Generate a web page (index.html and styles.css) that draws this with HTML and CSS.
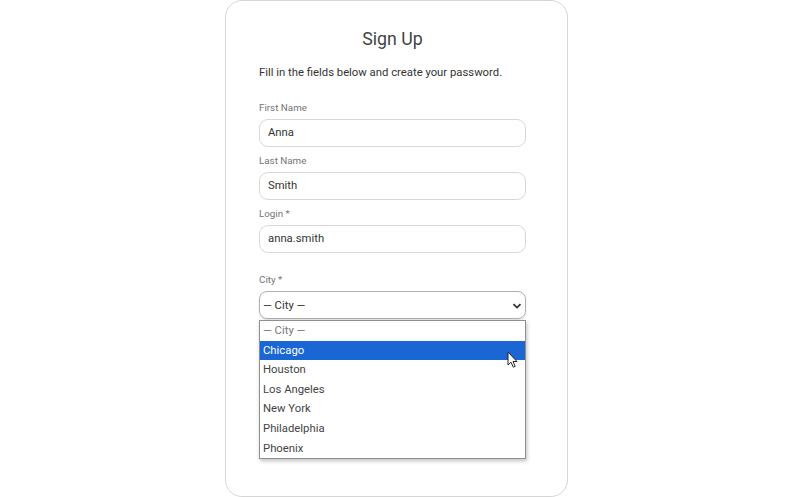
FILE: index.html
```html
<!DOCTYPE html>
<html>
<head>
<meta charset="utf-8">
<link rel="stylesheet" href="styles.css">
</head>
<body>
<div class="page">
  <div class="card">
    <h1 class="title">Sign Up</h1>
    <p class="lead">Fill in the fields below and create your password.</p>
    <div class="field">
      <label class="label">First Name</label>
      <div class="input">Anna</div>
    </div>
    <div class="field">
      <label class="label">Last Name</label>
      <div class="input">Smith</div>
    </div>
    <div class="field">
      <label class="label">Login *</label>
      <div class="input">anna.smith</div>
    </div>
    <div class="field city">
      <label class="label">City *</label>
      <div class="select-wrap">
        <div class="select">
          <span>— City —</span>
          <svg class="chev" width="10" height="6" viewBox="0 0 10 6"><path d="M1.5 1.2 L5 4.6 L8.5 1.2" fill="none" stroke="#333" stroke-width="1.8"/></svg>
        </div>
        <ul class="dropdown">
          <li class="opt placeholder">— City —</li>
          <li class="opt active">Chicago</li>
          <li class="opt">Houston</li>
          <li class="opt">Los Angeles</li>
          <li class="opt">New York</li>
          <li class="opt">Philadelphia</li>
          <li class="opt">Phoenix</li>
        </ul>
        <svg class="cursor" width="12" height="18" viewBox="0 0 12 18"><path d="M1 1 L1 14 L4 11.2 L6.3 16.2 L8.2 15.3 L6 10.5 L10 10.5 Z" fill="#fff" stroke="#222" stroke-width="1" stroke-linejoin="round"/></svg>
      </div>
    </div>
  </div>
</div>
</body>
</html>
```

FILE: styles.css
```css
* { box-sizing: border-box; }
html, body { margin: 0; padding: 0; background: #fff; }
body { font-family: Roboto, "Liberation Sans", sans-serif; color: #333; }
.page { display: flex; justify-content: center; padding-left: 1px; }
.card {
  width: 343px;
  height: 497px;
  border: 1px solid #d6d6d6;
  border-radius: 17px;
  padding: 25px 41px 0 33px;
}
.title {
  margin: 0;
  font-size: 17.8px;
  font-weight: 400;
  color: #444;
  text-align: center;
  line-height: 26px;
}
.lead {
  margin: 13px 0 0;
  font-size: 11.3px;
  line-height: 16px;
  color: #333;
}
.field { display: flex; flex-direction: column; }
.lead + .field { margin-top: 20px; }
.label {
  font-size: 9.8px;
  line-height: 14px;
  color: #757575;
  margin-bottom: 4px;
}
.input {
  height: 28px;
  border: 1px solid #d8d8d8;
  border-radius: 9px;
  padding: 0 8px;
  font-size: 11.3px;
  line-height: 26px;
  color: #333;
  margin-bottom: 7px;
}
.city { margin-top: 13px; }
.select-wrap { position: relative; }
.select {
  height: 28px;
  border: 1px solid #b0b0b0;
  border-radius: 8px;
  padding: 0 3px 0 3px;
  display: flex;
  align-items: center;
  justify-content: space-between;
  font-size: 11.3px;
  color: #333;
  box-shadow: 0 1px 2px rgba(0,0,0,0.12);
}
.chev { margin-top: 1px; }
.dropdown {
  position: absolute;
  left: 0;
  right: 0;
  top: 29px;
  margin: 0;
  padding: 0;
  list-style: none;
  background: #fff;
  border: 1px solid #8f8f8f;
  box-shadow: 1px 2px 4px rgba(0,0,0,0.25);
}
.opt {
  height: 19.6px;
  line-height: 19.6px;
  padding: 0 3px;
  font-size: 11.3px;
  color: #444;
}
.opt.placeholder { color: #777; }
.opt.active { background: #1a66d4; color: #fff; }
.cursor { position: absolute; left: 248px; top: 60px; }
```
